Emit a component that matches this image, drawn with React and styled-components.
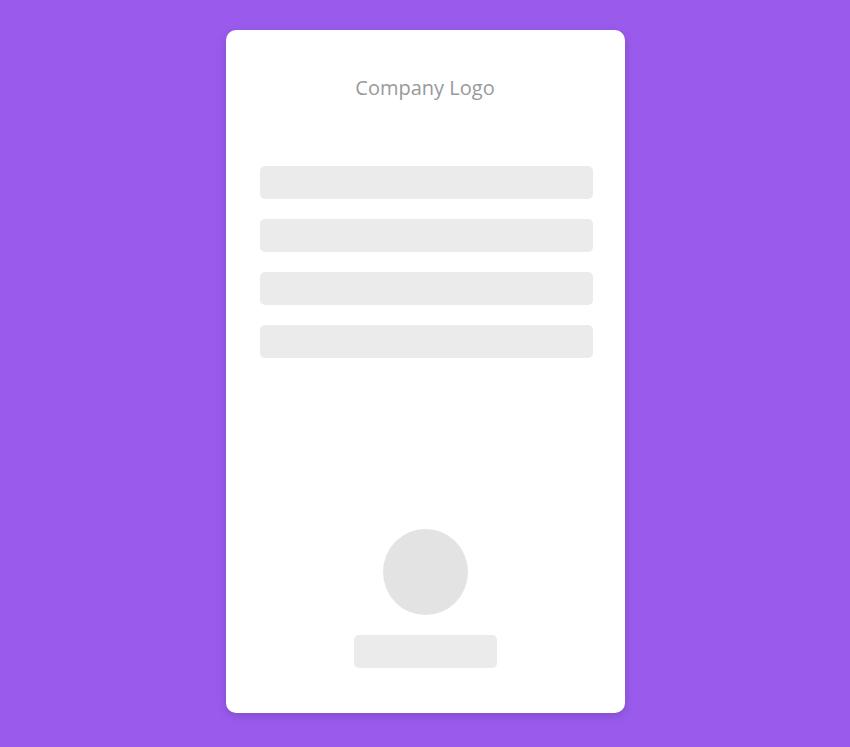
import React from "react";
import styled, { createGlobalStyle } from "styled-components";

const GlobalStyle = createGlobalStyle`
  *, *::before, *::after { box-sizing: border-box; }
  body {
    margin: 0;
    background: #9a5bed;
    font-family: "Open Sans", "Noto Sans", sans-serif;
  }
`;

const Page = styled.main`
  display: flex;
  justify-content: center;
  min-height: 100vh;
  padding: 30px 16px 34px;
`;

const Card = styled.section`
  display: flex;
  flex-direction: column;
  width: 100%;
  max-width: 399px;
  padding: 44px 0 45px;
  border-radius: 10px;
  background: #ffffff;
  box-shadow: 0 3px 10px rgba(0, 0, 0, 0.16);
`;

const Logo = styled.h1`
  margin: 0 0 64px;
  color: #979a9c;
  font-size: 20px;
  font-weight: 400;
  line-height: 28px;
  text-align: center;
`;

const Lines = styled.div`
  display: flex;
  flex-direction: column;
  gap: 20px;
  padding: 0 32px 0 34px;
`;

const Bar = styled.div`
  width: ${({ $short }) => ($short ? "143px" : "100%")};
  height: 33px;
  border-radius: 5px;
  background: #ebebeb;
`;

const Profile = styled.footer`
  display: flex;
  flex-direction: column;
  align-items: center;
  gap: 20px;
  margin-top: auto;
  padding-top: 32px;
`;

const Avatar = styled.div`
  width: 85px;
  height: 86px;
  border-radius: 50%;
  background: #e3e3e3;
`;

export default function App() {
  return (
    <>
      <GlobalStyle />
      <Page>
        <Card>
          <Logo>Company Logo</Logo>
          <Lines>
            <Bar />
            <Bar />
            <Bar />
            <Bar />
          </Lines>
          <Profile>
            <Avatar />
            <Bar $short />
          </Profile>
        </Card>
      </Page>
    </>
  );
}
